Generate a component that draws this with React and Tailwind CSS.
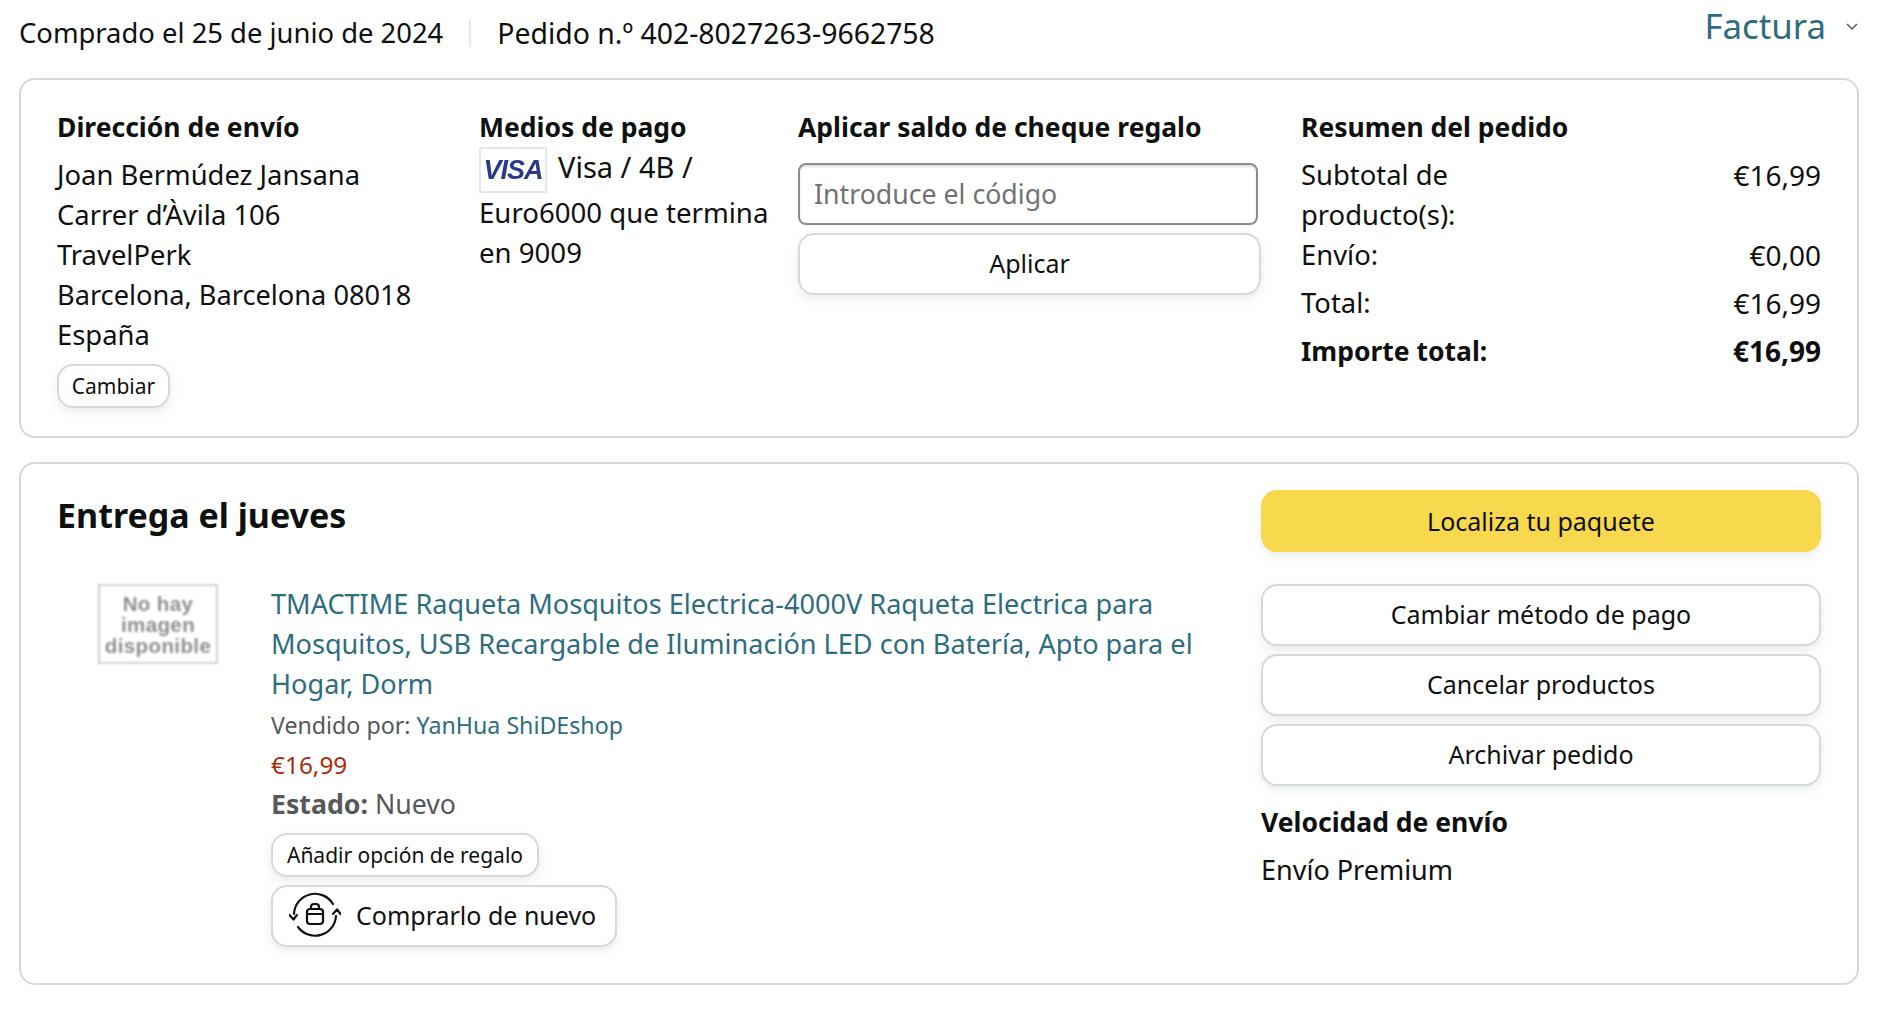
const FONT = "font-['Noto_Sans',sans-serif]";

function Btn({ children, className = "" }) {
  return (
    <button className={`flex items-center justify-center bg-white border-2 border-[#d5d9d9] rounded-2xl shadow-[0_4px_10px_rgba(213,217,217,0.5)] text-[#0f1111] ${className}`}>
      {children}
    </button>
  );
}

function BagIcon() {
  return (
    <svg width="52" height="48" viewBox="-26 -24 52 48" fill="none" stroke="#0f1111" strokeWidth="2.2" strokeLinecap="round" strokeLinejoin="round" className="shrink-0">
      <path d="M-21 -1 A21 21 0 0 1 18 -11" />
      <path d="M21 1 A21 21 0 0 1 -17 12" />
      <path d="M-25.5 0 L-21.5 4.5 L-18 0" />
      <path d="M18 -1 L22 -5.5 L25.5 -1" />
      <rect x="-8" y="-6" width="16" height="15" rx="3" />
      <path d="M-8 -1 H8" />
      <path d="M-4 -6 V-8 A3 3 0 0 1 -1 -11 H1 A3 3 0 0 1 4 -8 V-6" />
    </svg>
  );
}

function Row({ label, value, bold, className = "" }) {
  return (
    <div className={`flex justify-between ${bold ? "font-bold text-[26.5px]" : ""} ${className}`}>
      <span className="w-[190px]">{label}</span>
      <span className="text-[28px]">{value}</span>
    </div>
  );
}

export default function App() {
  return (
    <div className={`min-h-screen bg-white text-[#0f1111] text-[27.4px] leading-[40px] px-[19px] ${FONT}`}>

      {/* HEADER */}
      <div className="h-[78px] flex justify-between items-start">
        <div className="flex items-center h-[40px] mt-[13px]">
          <span>Comprado el 25 de junio de 2024</span>
          <span className="w-[2px] h-[28px] bg-[#e7e7e7] mx-[26px]" />
          <span className="text-[28.4px]">Pedido n.º 402-8027263-9662758</span>
        </div>
        <div className="flex items-center mt-[6px] mr-[12px]">
          <span className="text-[#2e6c80] text-[34.8px]">Factura</span>
          <svg width="14" height="10" viewBox="0 0 14 10" fill="none" stroke="#565959" strokeWidth="1.5" className="ml-[19px] mt-[2px]">
            <path d="M2 2 L7 7 L12 2" />
          </svg>
        </div>
      </div>

      {/* RESUMEN */}
      <div className="w-[1840px] h-[360px] border-2 border-[#d5d9d9] rounded-2xl px-[36px] pt-[27px] grid grid-cols-[422px_319px_503px_1fr]">
        <div>
          <div className="font-bold text-[26.5px]">Dirección de envío</div>
          <div className="mt-[8px]">Joan Bermúdez Jansana</div>
          <div>Carrer d’Àvila 106</div>
          <div>TravelPerk</div>
          <div className="text-[27.2px]">Barcelona, Barcelona 08018</div>
          <div>España</div>
          <Btn className="mt-[9px] w-[113px] h-[44px] text-[21px] leading-none">Cambiar</Btn>
        </div>

        <div>
          <div className="font-bold text-[26.5px]">Medios de pago</div>
          <div className="flex items-start h-[46px]">
            <div className="w-[68px] h-[46px] border-2 border-[#e7e7e7] flex items-center justify-center font-['Liberation_Sans',sans-serif] font-bold italic text-[27px] leading-none text-[#2b3a86] tracking-[-1px] blur-[0.6px]">
              VISA
            </div>
            <span className="ml-[11px] text-[29px]">Visa / 4B /</span>
          </div>
          <div className="w-[296px] text-[27.6px] mt-[-1px]">Euro6000 que termina en 9009</div>
        </div>

        <div>
          <div className="font-bold text-[26.5px]">Aplicar saldo de cheque regalo</div>
          <div className="mt-[16px] w-[460px] h-[62px] border-2 border-[#888c8c] rounded-lg shadow-[inset_0_2px_2px_rgba(15,17,17,0.12)] flex items-center px-[14px] text-[#6f7373] text-[26.7px]">
            Introduce el código
          </div>
          <Btn className="mt-[8px] w-[463px] h-[62px] pb-[2px] text-[25px]">Aplicar</Btn>
        </div>

        <div>
          <div className="font-bold text-[26.5px]">Resumen del pedido</div>
          <Row label="Subtotal de producto(s):" value="€16,99" className="mt-[8px]" />
          <Row label="Envío:" value="€0,00" />
          <Row label="Total:" value="€16,99" className="mt-[8px]" />
          <Row label="Importe total:" value="€16,99" bold className="mt-[8px] [&>span:first-child]:w-auto" />
        </div>
      </div>

      {/* ENVIO */}
      <div className="w-[1840px] h-[523px] mt-[24px] border-2 border-[#d5d9d9] rounded-2xl pl-[36px] pr-[36px] flex justify-between">
        <div>
          <div className="mt-[26px] font-bold text-[34px] leading-[50px]">Entrega el jueves</div>

          <div className="mt-[44px] flex">
            <div className="ml-[41px] w-[120px] h-[80px] border-2 border-[#cfcfcf] flex flex-col items-center justify-center font-['Liberation_Sans',sans-serif] font-bold text-[#8f8f8f] text-[20.5px] leading-[21px] tracking-[0.4px] blur-[1px] shrink-0">
              <span>No hay</span>
              <span>imagen</span>
              <span>disponible</span>
            </div>
            <div className="ml-[53px] w-[930px]">
              <div className="text-[#2e6c80] text-[27.1px]">
                TMACTIME Raqueta Mosquitos Electrica-4000V Raqueta Electrica para Mosquitos, USB Recargable de Iluminación LED con Batería, Apto para el Hogar, Dorm
              </div>
              <div className="text-[#565959] text-[23.2px] pt-[1px] h-[40px]">
                Vendido por: <span className="text-[#2e6c80]">YanHua ShiDEshop</span>
              </div>
              <div className="text-[#ad2c0e] text-[24.4px] pt-[1px] h-[40px]">€16,99</div>
              <div className="text-[#565959] text-[26.7px]"><b>Estado:</b> Nuevo</div>
              <Btn className="mt-[9px] w-[268px] h-[44px] text-[21px] leading-none">Añadir opción de regalo</Btn>
              <Btn className="mt-[8px] w-[346px] h-[62px] justify-start pl-[16px] pb-[2px]">
                <BagIcon />
                <span className="ml-[15px] text-[25px]">Comprarlo de nuevo</span>
              </Btn>
            </div>
          </div>
        </div>

        <div className="w-[560px] pt-[26px] shrink-0">
          <button className="w-full h-[62px] pb-[1px] rounded-2xl bg-[#f8d84c] shadow-[0_4px_10px_rgba(213,217,217,0.5)] text-[25px]">Localiza tu paquete</button>
          <div className="mt-[32px] flex flex-col gap-[8px] text-[25px]">
            <Btn className="w-full h-[62px] pb-[2px]">Cambiar método de pago</Btn>
            <Btn className="w-full h-[62px] pb-[2px]">Cancelar productos</Btn>
            <Btn className="w-full h-[62px] pb-[2px]">Archivar pedido</Btn>
          </div>
          <div className="mt-[16px] font-bold text-[26.5px]">Velocidad de envío</div>
          <div className="mt-[8px] text-[27px]">Envío Premium</div>
        </div>
      </div>
    </div>
  );
}
